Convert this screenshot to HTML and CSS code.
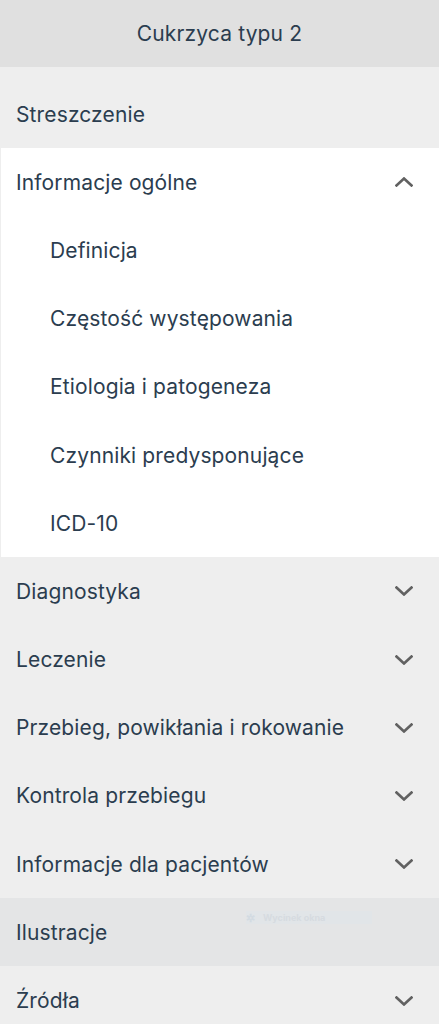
FILE: index.html
```html
<!DOCTYPE html>
<html lang="pl">
<head>
<meta charset="utf-8">
<title>Cukrzyca typu 2</title>
<link rel="stylesheet" href="styles.css">
</head>
<body>
<header class="title">Cukrzyca typu 2</header>
<nav class="toc">
  <div class="row">Streszczenie</div>
  <div class="group open">
    <div class="row">Informacje ogólne
      <svg class="chev" viewBox="0 0 18 10" width="18" height="10"><path d="M1.5 8.5 L9 1.5 L16.5 8.5"/></svg>
    </div>
    <div class="row sub">Definicja</div>
    <div class="row sub">Częstość występowania</div>
    <div class="row sub">Etiologia i patogeneza</div>
    <div class="row sub">Czynniki predysponujące</div>
    <div class="row sub">ICD-10</div>
  </div>
  <div class="row">Diagnostyka
    <svg class="chev" viewBox="0 0 18 10" width="18" height="10"><path d="M1.5 1.5 L9 8.5 L16.5 1.5"/></svg>
  </div>
  <div class="row">Leczenie
    <svg class="chev" viewBox="0 0 18 10" width="18" height="10"><path d="M1.5 1.5 L9 8.5 L16.5 1.5"/></svg>
  </div>
  <div class="row">Przebieg, powikłania i rokowanie
    <svg class="chev" viewBox="0 0 18 10" width="18" height="10"><path d="M1.5 1.5 L9 8.5 L16.5 1.5"/></svg>
  </div>
  <div class="row">Kontrola przebiegu
    <svg class="chev" viewBox="0 0 18 10" width="18" height="10"><path d="M1.5 1.5 L9 8.5 L16.5 1.5"/></svg>
  </div>
  <div class="row">Informacje dla pacjentów
    <svg class="chev" viewBox="0 0 18 10" width="18" height="10"><path d="M1.5 1.5 L9 8.5 L16.5 1.5"/></svg>
  </div>
  <div class="row hl">Ilustracje
    <span class="ghost"><span class="ghost-ico">✲</span>Wycinek okna</span>
  </div>
  <div class="row">Źródła
    <svg class="chev" viewBox="0 0 18 10" width="18" height="10"><path d="M1.5 1.5 L9 8.5 L16.5 1.5"/></svg>
  </div>
</nav>
</body>
</html>
```
FILE: styles.css
```css
html, body {
  margin: 0;
  padding: 0;
  background: #eeeeee;
}
body {
  font-family: Inter, "Noto Sans", sans-serif;
  color: #2b3d4f;
  width: 439px;
}
.title {
  height: 67px;
  background: #e0e0e0;
  display: flex;
  align-items: center;
  justify-content: center;
  font-size: 21px;
  letter-spacing: 0.15px;
}
.toc {
  padding-top: 13px;
}
.row {
  position: relative;
  height: 68.2px;
  display: flex;
  align-items: center;
  justify-content: space-between;
  padding: 0 16px;
  font-size: 21px;
  letter-spacing: 0.13px;
}
.group.open {
  background: #ffffff;
  margin-left: 1px;
}
.group.open > .row:first-child {
  padding-left: 15px;
}
.row.sub {
  padding-left: 49px;
}
.chev {
  fill: none;
  stroke: #616161;
  stroke-width: 2.6;
  stroke-linecap: square;
  margin-right: 10px;
}
.row.hl {
  background: #e4e5e6;
}
.ghost {
  position: absolute;
  left: 246px;
  top: 13px;
  width: 126px;
  height: 13px;
  background: #e1e5e8;
  color: #d6dbe0;
  font-size: 9px;
  font-weight: 700;
  letter-spacing: 0;
  display: flex;
  align-items: center;
  gap: 8px;
}
.ghost-ico {
  color: #d3dbe2;
  font-size: 11px;
}
```
